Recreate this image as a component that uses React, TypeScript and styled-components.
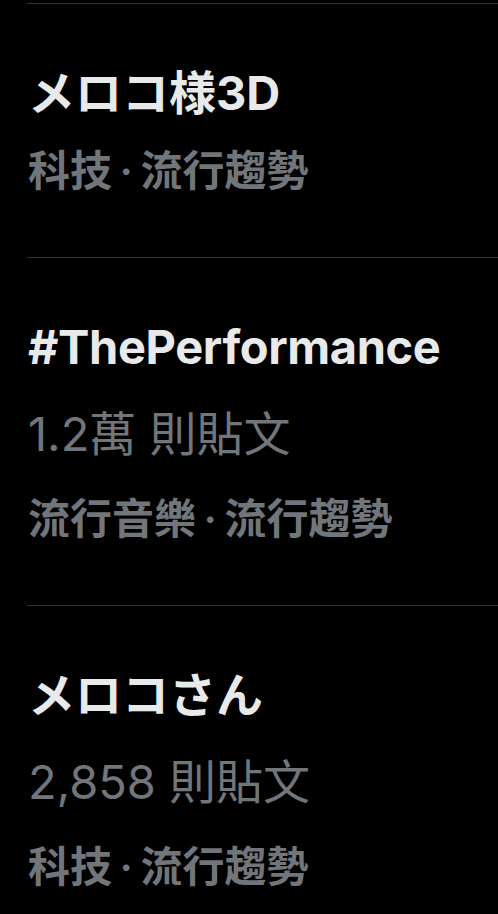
import React from "react";
import styled, { createGlobalStyle } from "styled-components";

const GlobalStyle = createGlobalStyle`
  html, body {
    margin: 0;
    padding: 0;
    background: #000000;
  }
  body {
    font-family: Inter, "Noto Sans CJK TC", sans-serif;
    -webkit-font-smoothing: antialiased;
  }
`;

const List = styled.div`
  padding-top: 3px;
  overflow: hidden;
  background: #000000;
  min-height: 914px;
  box-sizing: border-box;
`;

const Item = styled.div`
  margin-left: 27px;
  border-top: 1px solid #2f3336;
  padding: 48px 0 49px 1px;
  display: flex;
  flex-direction: column;
`;

const Title = styled.div<{ $lang: "ja" | "en" }>`
  font-family: Inter,
    ${(p) => (p.$lang === "ja" ? `"Noto Sans CJK JP"` : `"Noto Sans CJK TC"`)},
    sans-serif;
  font-size: 47px;
  font-weight: 700;
  letter-spacing: ${(p) => (p.$lang === "en" ? "-0.4px" : "0")};
  line-height: 81px;
  height: 81px;
  color: #e7e9ea;
  white-space: nowrap;
`;

const Count = styled.div`
  font-family: Inter, "Noto Sans CJK TC", sans-serif;
  font-size: 47px;
  font-weight: 400;
  line-height: 94px;
  height: 94px;
  color: #71767b;
  white-space: nowrap;
`;

const Category = styled.div`
  font-family: Inter, "Noto Sans CJK TC", sans-serif;
  font-size: 42px;
  font-weight: 600;
  word-spacing: -3px;
  line-height: 75px;
  height: 75px;
  color: #71767b;
  white-space: nowrap;
`;

type Trend = {
  title: string;
  lang: "ja" | "en";
  count?: string;
  category: string;
};

const trends: Trend[] = [
  { title: "メロコ様3D", lang: "ja", category: "科技 · 流行趨勢" },
  {
    title: "#ThePerformance",
    lang: "en",
    count: "1.2萬 則貼文",
    category: "流行音樂 · 流行趨勢",
  },
  {
    title: "メロコさん",
    lang: "ja",
    count: "2,858 則貼文",
    category: "科技 · 流行趨勢",
  },
];

export default function App() {
  return (
    <>
      <GlobalStyle />
      <List>
        {trends.map((t) => (
          <Item key={t.title}>
            <Title $lang={t.lang} lang={t.lang === "ja" ? "ja" : "en"}>
              {t.title}
            </Title>
            {t.count && <Count lang="zh-Hant">{t.count}</Count>}
            <Category lang="zh-Hant">{t.category}</Category>
          </Item>
        ))}
      </List>
    </>
  );
}
